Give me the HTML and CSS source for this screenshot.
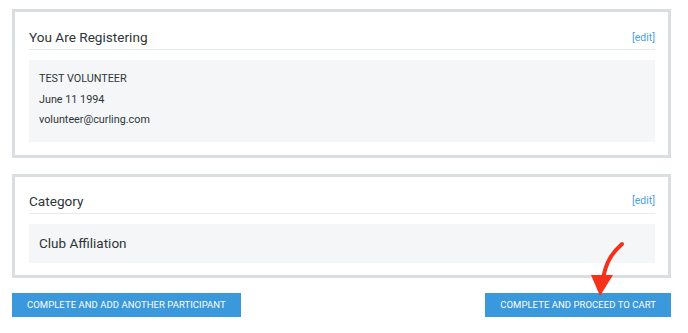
FILE: index.html
```html
<!DOCTYPE html>
<html>
<head>
  <title>Registration Summary</title>
  <link rel="stylesheet" href="styles.css">
</head>
<body>
  <div class="page">
    <div class="panel">
      <div class="panel-header">
        <h2>You Are Registering</h2>
        <a class="edit-link" href="#">[edit]</a>
      </div>
      <div class="panel-body">
        <div class="line">TEST VOLUNTEER</div>
        <div class="line">June 11 1994</div>
        <div class="line">volunteer@curling.com</div>
      </div>
    </div>

    <div class="panel panel-category">
      <div class="panel-header">
        <h2>Category</h2>
        <a class="edit-link" href="#">[edit]</a>
      </div>
      <div class="panel-body">
        <div class="category-name">Club Affiliation</div>
      </div>
    </div>

    <div class="actions">
      <button class="button">Complete and add another participant</button>
      <button class="button">Complete and proceed to cart</button>
      <svg class="arrow" width="50" height="60" viewBox="0 0 50 60" xmlns="http://www.w3.org/2000/svg">
        <path d="M37 3 C 28 11, 21 20, 18 38" fill="none" stroke="#f5311a" stroke-width="4" stroke-linecap="round"/>
        <polygon points="6,34 28,34 15,55" fill="#f5311a"/>
      </svg>
    </div>
  </div>
</body>
</html>
```

FILE: styles.css
```css
* {
  margin: 0;
  padding: 0;
  box-sizing: border-box;
}

body {
  font-family: 'Roboto', sans-serif;
  background-color: #ffffff;
  color: #2e3539;
}

.page {
  position: relative;
  width: 659px;
  margin: 9px 0 0 12px;
}

.panel {
  border: 3px solid #d9dee1;
  padding: 13px 13px 13px 14px;
  margin-bottom: 16px;
}

.panel-category {
  padding-top: 12px;
  padding-bottom: 12px;
  margin-bottom: 15px;
}

.panel-header {
  display: flex;
  align-items: center;
  justify-content: space-between;
  height: 25px;
  border-bottom: 1px solid #e6eaec;
  margin-bottom: 10px;
}

.panel-header h2 {
  font-size: 13.6px;
  font-weight: 400;
  line-height: 24px;
  color: #2e3539;
}

.edit-link {
  font-size: 10.5px;
  color: #4a9fe3;
  text-decoration: none;
}

.panel-body {
  background-color: #f5f6f8;
  padding: 9px 10px 11px;
}

.line {
  font-size: 10.8px;
  line-height: 20.5px;
}

.panel-category .panel-body {
  padding: 9px 10px 9px;
}

.category-name {
  font-size: 13.5px;
  line-height: 21px;
}

.actions {
  position: relative;
  display: flex;
  justify-content: space-between;
}

.button {
  height: 24px;
  padding: 0 14px;
  background-color: #3a98dc;
  border: 1px solid #3a98dc;
  color: #ffffff;
  font-family: inherit;
  font-size: 9.5px;
  letter-spacing: 0.05px;
  text-transform: uppercase;
  white-space: nowrap;
  cursor: pointer;
}

.arrow {
  position: absolute;
  left: 573px;
  top: -52px;
}
```
